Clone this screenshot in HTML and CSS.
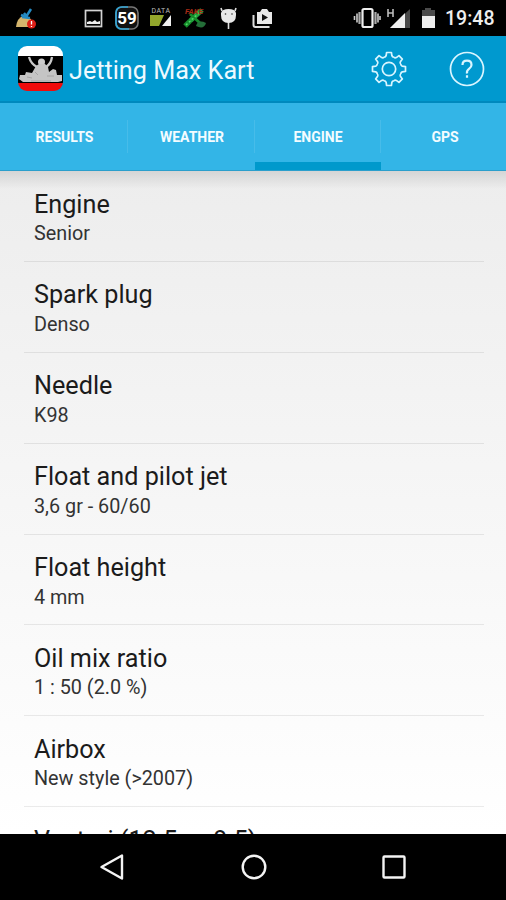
FILE: index.html
```html
<!DOCTYPE html>
<html lang="en">
<head>
<meta charset="utf-8">
<title>Jetting Max Kart</title>
<link rel="stylesheet" href="styles.css">
</head>
<body>
<div class="screen">
  <header class="status">
    <svg class="notifications" width="290" height="36" viewBox="0 0 290 36">
      <path d="M16 27Q17 18 23 16L31 19V27Z" fill="#d5b56d"/>
      <path d="M21 15l5 2 5-8M24 13l4 5M22 17l8 1" fill="none" stroke="#258bc4" stroke-width="2.500"/>
      <circle cx="31.500" cy="24" r="4.500" fill="#dc1e17"/><path d="M31.500 21v3.500M31.500 26v1" stroke="#fff" stroke-width="1.300"/>
      <rect x="85.500" y="10.500" width="16" height="16" fill="none" stroke="#d4d4d4" stroke-width="1.700"/>
      <path d="M87 24v-2l3-1 2 1 3-2 2 2 3-1v3z" fill="#eee"/>
      <rect x="116" y="7" width="22" height="22" rx="6" fill="#111" stroke="#777" stroke-width="1.600"/>
      <path d="M128 7h-6q-6 0-6 6v10q0 6 6 6h7" fill="none" stroke="#32a5d5" stroke-width="1.700"/>
      <text class="count" x="127" y="24">59</text>
      <text class="data" x="161" y="13">DATA</text>
      <path d="M150 15h14l-5 11h-9z" fill="#92a62c"/><path d="M171 15v11h-9z" fill="#f0f0f0"/>
      <path d="M185 26l5-5" stroke="#168b2b" stroke-width="5"/><path d="M190 21l12-11" stroke="#1fa03a" stroke-width="5"/><path d="M190 14l10 9" stroke="#168b2b" stroke-width="3"/>
      <path d="M186 25l14-13" stroke="#52d968" stroke-width="1.500" stroke-dasharray="2 2"/>
      <path d="M196 26q2-7 10-3q-2 7-10 3" fill="#246e38"/>
      <text class="fake" x="194" y="14">FAKE</text>
      <path d="M222 11l-1-3M235 11l1-3M228.500 22v7" stroke="#ddd" stroke-width="1.600"/>
      <path d="M221 13q1-4 7.500-4t7.500 4v2q0 8-7.500 8t-7.500-8z" fill="#e8e8e8"/>
      <circle cx="225.500" cy="14" r=".8" fill="#333"/><circle cx="232" cy="14" r=".8" fill="#333"/>
      <path d="M253.500 15v10q0 2 2 2h14" fill="none" stroke="#ddd" stroke-width="2"/>
      <path d="M257 12h3l2-3h5l2 3h3v12h-15z" fill="#e8e8e8"/><path d="M262 14v7l6-3.500z" fill="#111"/>
    </svg>
    <div class="system">
      <svg width="90" height="36" viewBox="350 0 90 36">
        <rect x="362.500" y="9" width="10" height="18" rx="1.500" fill="none" stroke="#eee" stroke-width="2.200"/>
        <path d="M359.500 12v12M375.500 12v12" stroke="#aaa" stroke-width="2.200"/><path d="M357 13.500v9M378 13.500v9M354.500 16v4M380 16v4" stroke="#ccc" stroke-width="1.600"/>
        <path d="M388 9v8M393 9v8M388 13h5" stroke="#bbb" stroke-width="1.600"/>
        <path d="M390 28L410 9v19z" fill="#494949"/><path d="M390 28l15-15v15z" fill="#f0f0f0"/>
        <path d="M422 10h3V8h6v2h4v18h-13z" fill="#4b4b4b"/><path d="M422 16h13v12h-13z" fill="#eee"/>
      </svg>
      <span class="clock">19:48</span>
    </div>
  </header>
  <div class="appbar">
    <svg class="logo" width="46" height="46" viewBox="0 0 46 46">
      <clipPath id="badge"><rect width="45" height="45" rx="9"/></clipPath>
      <g clip-path="url(#badge)"><path d="M0 0h46v10H0z" fill="#fff"/><path d="M0 10h46v27H0z" fill="#000"/><path d="M0 37h46v9H0z" fill="#f00b0b"/></g>
      <path d="M19 21q-6-3-8-10M28 21q5-3 6-10" fill="none" stroke="#c9c9c9" stroke-width="2.300"/>
      <circle cx="23.500" cy="16" r="3.500" fill="#ccc"/>
      <path d="M18 20l3-2h6l3 3 1 5 4-3 3 1 1 5h5v6l-4 1H5l-4-3 1-4h5l1-3 6 1z" fill="#c5c5c5"/>
      <path d="M9 31l5 1M17 26l3 3M29 30h7M13 35h20" stroke="#a5a5a5"/>
    </svg>
    <h1>Jetting Max Kart</h1>
    <svg class="gear" width="38" height="38" viewBox="-19 -19 38 38">
      <defs><path id="tooth" d="M-4.900-11.800Q-3.300-11.800-2.900-13.200L-2.400-16.500H2.400L2.900-13.200Q3.300-11.800 4.900-11.800"/></defs>
      <use href="#tooth"/><use href="#tooth" transform="rotate(45)"/><use href="#tooth" transform="rotate(90)"/><use href="#tooth" transform="rotate(135)"/><use href="#tooth" transform="rotate(180)"/><use href="#tooth" transform="rotate(225)"/><use href="#tooth" transform="rotate(270)"/><use href="#tooth" transform="rotate(315)"/>
      <circle r="6.700"/>
    </svg>
    <svg class="help" width="38" height="38" viewBox="-19 -19 38 38">
      <circle r="16.500"/><path class="mark" d="M-4.500-4Q-4.500-8.300 0-8.300T4.500-4Q4.500-2 2-.200T0 4.500M0 6.300v2.400"/>
    </svg>
  </div>
  <nav class="tabs"><a>RESULTS</a><a>WEATHER</a><a class="active">ENGINE</a><a>GPS</a></nav>
  <main class="list">
    <section><h2>Engine</h2><p>Senior</p></section>
    <section><h2>Spark plug</h2><p>Denso</p></section>
    <section><h2>Needle</h2><p>K98</p></section>
    <section><h2>Float and pilot jet</h2><p>3,6 gr - 60/60</p></section>
    <section><h2>Float height</h2><p>4 mm</p></section>
    <section><h2>Oil mix ratio</h2><p>1 : 50 (2.0 %)</p></section>
    <section><h2>Airbox</h2><p>New style (&gt;2007)</p></section>
    <section><h2>Venturi (12.5 or 8.5)</h2></section>
  </main>
  <footer class="navbar">
    <svg width="30" height="30" viewBox="0 0 30 30"><path d="M3.500 15L24 3.500v23z"/></svg>
    <svg width="30" height="30" viewBox="0 0 30 30"><circle cx="15" cy="15" r="11.300"/></svg>
    <svg width="30" height="30" viewBox="0 0 30 30"><rect x="4.500" y="4.500" width="21" height="21" rx="1"/></svg>
  </footer>
</div>
</body>
</html>
```
FILE: styles.css
```css
* { box-sizing: border-box; }
body { margin: 0; font-family: Roboto, "Liberation Sans", sans-serif; }
.screen { width: 506px; height: 900px; display: flex; flex-direction: column; overflow: hidden; background: #000; }
.status { height: 36px; flex: none; display: flex; justify-content: space-between; color: #eee; }
.status svg { display: block; }
.count { font-size: 17px; font-weight: 700; fill: #fff; text-anchor: middle; }
.data { font-size: 7px; fill: #bbb; text-anchor: middle; letter-spacing: .5px; }
.fake { font-size: 8px; font-weight: 700; fill: #a42b16; text-anchor: middle; font-style: italic; }
.system { display: flex; }
.clock { width: 66px; padding-left: 5px; font-size: 19.5px; line-height: 38px; font-weight: 500; white-space: nowrap; }
.appbar { height: 67px; flex: none; display: flex; align-items: center; padding-left: 18px; background: #0099cf; border-bottom: 2px solid #0089be; color: #eefaff; }
.logo { flex: none; }
h1 { width: 301px; margin: 4px 0 0 5px; font-size: 25.2px; line-height: 32px; font-weight: 400; white-space: nowrap; }
.gear, .help { flex: none; margin-top: 1px; fill: none; stroke: #d9f5ff; stroke-width: 1.7; stroke-linejoin: round; }
.help { margin-left: 40px; }
.mark { stroke-width: 2.2; }
.tabs { height: 68px; flex: none; display: grid; grid-template-columns: 128px 127px 126px 125px; background: #33b5e7; border-bottom: 1px solid #2b9fcc; }
.tabs a { display: flex; align-items: center; justify-content: center; padding-top: 1px; padding-left: 1px; color: #f4fcff; font-size: 14px; font-weight: 700; background: linear-gradient(#47bce9, #47bce9) right 17px / 1px 33px no-repeat; }
.tabs a:last-child { background: none; padding-left: 3px; }
.tabs .active { border-bottom: 8px solid #0099cc; padding-top: 9px; padding-left: 0; }
.list { flex: 1; min-height: 0; overflow: hidden; padding: 0 22px 0 24px; background: linear-gradient(#d5d5d5, rgba(225,225,225,0)) 0 0 / 100% 18px no-repeat, linear-gradient(#ededed, #fff); }
.list section { height: 90.9px; padding: 17.5px 10px 0; border-bottom: 1px solid rgba(0,0,0,.08); }
h2 { margin: 0; font-size: 25.2px; line-height: 32px; font-weight: 400; color: #1b1b1b; white-space: nowrap; }
.list p { margin: 1.5px 0 0; font-size: 19.8px; line-height: 24px; color: #333; }
.navbar { height: 66px; flex: none; display: flex; justify-content: space-between; align-items: center; padding: 0 97px 0 98px; background: #000; }
.navbar svg { fill: none; stroke: #f4f4f4; stroke-width: 2.4; stroke-linejoin: round; }
```
